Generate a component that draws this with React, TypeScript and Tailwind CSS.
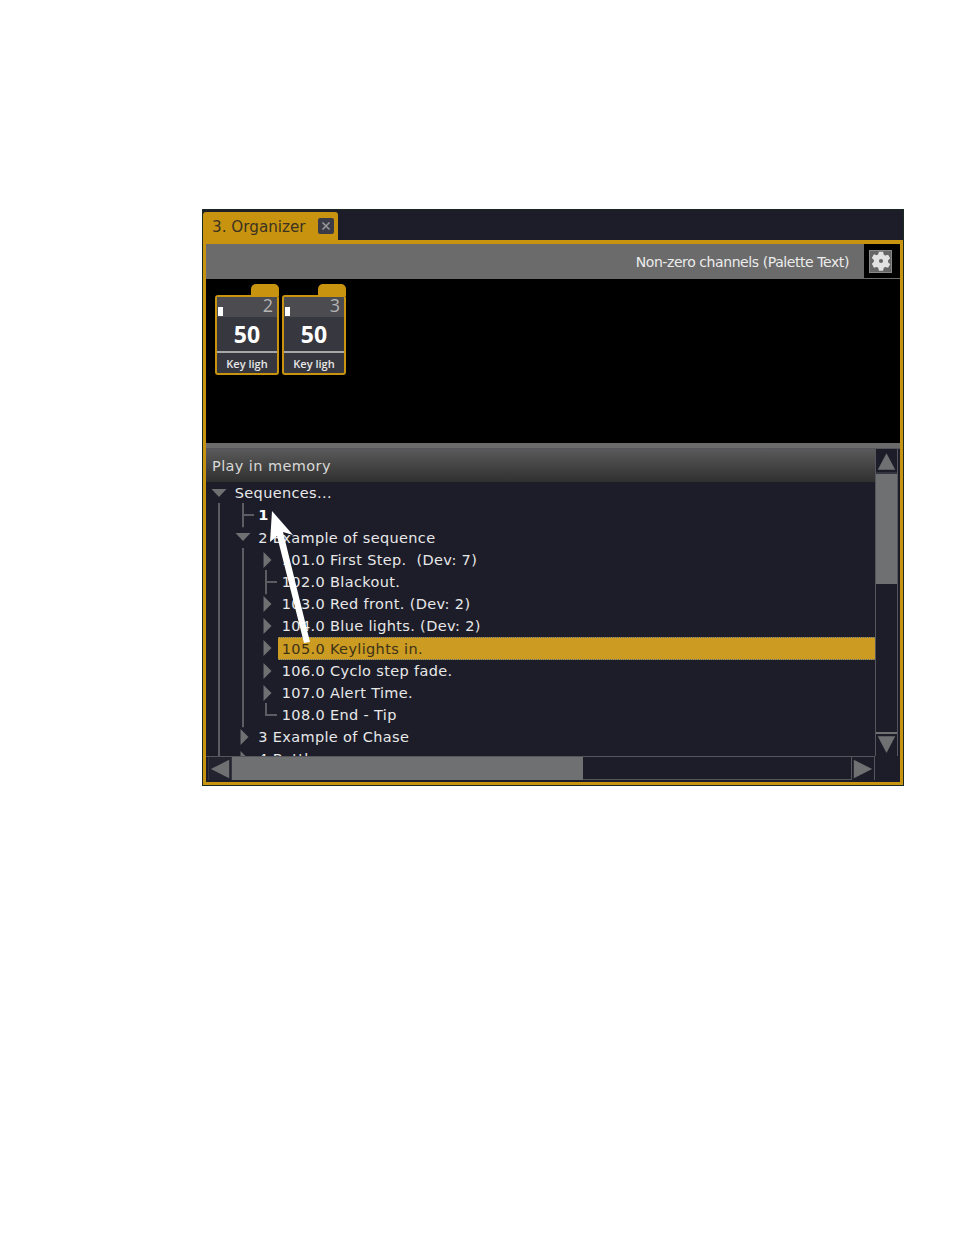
import React from "react";

type Glyph = "line" | "open" | "closed" | "tee" | "end";

type TreeRow = {
  cells: Glyph[];
  label: string;
  bold?: boolean;
  selected?: boolean;
};

const rows: TreeRow[] = [
  { cells: ["open"], label: "Sequences..." },
  { cells: ["line", "tee"], label: "1", bold: true },
  { cells: ["line", "open"], label: "2 Example of sequence" },
  { cells: ["line", "line", "closed"], label: "101.0 First Step.  (Dev: 7)" },
  { cells: ["line", "line", "tee"], label: "102.0 Blackout." },
  { cells: ["line", "line", "closed"], label: "103.0 Red front. (Dev: 2)" },
  { cells: ["line", "line", "closed"], label: "104.0 Blue lights. (Dev: 2)" },
  { cells: ["line", "line", "closed"], label: "105.0 Keylights in.", selected: true },
  { cells: ["line", "line", "closed"], label: "106.0 Cyclo step fade." },
  { cells: ["line", "line", "closed"], label: "107.0 Alert Time." },
  { cells: ["line", "line", "end"], label: "108.0 End - Tip" },
  { cells: ["line", "closed"], label: "3 Example of Chase" },
  { cells: ["line", "closed"], label: "4 Bottle" },
];

function TreeGlyph({ kind }: { kind: Glyph }) {
  return (
    <svg width="23.5" height="22.2" viewBox="0 0 23.5 22.2" className="shrink-0 block overflow-visible">
      {kind === "line" && <rect x="11" y="-1" width="2" height="24.2" fill="#5c5d63" />}
      {kind === "open" && <polygon points="4.5,7 19.5,7 12,15" fill="#6f7072" />}
      {kind === "closed" && <polygon points="9.5,3 17.5,11 9.5,19" fill="#6f7072" />}
      {kind === "tee" && <path d="M12 -1V23.200M12 11H23" stroke="#5c5d63" strokeWidth="2" fill="none" />}
      {kind === "end" && <path d="M12 -1V11H23" stroke="#5c5d63" strokeWidth="2" fill="none" />}
    </svg>
  );
}

function Row({ row }: { row: TreeRow }) {
  return (
    <div className="flex h-[22.2px] items-stretch shrink-0">
      {row.cells.map((c, i) => (
        <TreeGlyph key={i} kind={c} />
      ))}
      <div
        className={`flex-1 pl-[4px] pt-[2px] flex items-center whitespace-pre text-[14.5px] tracking-[0.35px] ${
          row.selected
            ? "bg-[#cb9b22] text-[#3d3218] border-y border-dotted border-[#5a6a80]"
            : row.bold
              ? "text-white font-bold"
              : "text-[#e8e8e8]"
        }`}
      >
        {row.label}
      </div>
    </div>
  );
}

function PaletteCard({ num }: { num: string }) {
  return (
    <div className="w-[64px] flex flex-col items-end">
      <div className="w-[28px] h-[12px] bg-[#c8940f] rounded-t-[5px] -mb-px" />
      <div
        className="w-full h-[80px] border-2 border-[#c8940f] rounded-[3px] bg-[#37373f] flex flex-col"
        style={{ fontFamily: '"Open Sans", sans-serif' }}
      >
        <div className="h-[20px] bg-[#4b4b50] flex justify-between pl-px pr-[4px]">
          <div className="w-[5px] h-[9px] bg-white mt-[10px]" />
          <span className="text-[18px] leading-[17px] text-[#b4b4b4]">{num}</span>
        </div>
        <div className="flex-1 flex items-center justify-center text-[23px] font-bold text-white">50</div>
        <div className="h-[22px] border-t-2 border-[#a8a8a8] pt-[2px] flex items-center justify-center text-[11px] font-semibold text-[#e8e8e8] whitespace-nowrap">
          Key ligh
        </div>
      </div>
    </div>
  );
}

function ScrollArrow({ dir }: { dir: "up" | "down" | "left" | "right" }) {
  const points = {
    up: "12,3 22,22 2,22",
    down: "2,2 22,2 12,21",
    left: "2,12 22,2 22,22",
    right: "2,2 22,12 2,22",
  }[dir];
  return (
    <svg width="24" height="24" viewBox="0 0 24 24" className="block">
      <polygon points={points} fill="#6f7072" />
    </svg>
  );
}

export default function App() {
  return (
    <div
      className="min-h-[1235px] bg-white pt-[209px] pl-[202px]"
      style={{ fontFamily: '"DejaVu Sans", "Noto Sans", sans-serif' }}
    >
      <div className="relative w-[702px] h-[577px] bg-[#1c1d29] border border-[#1a2a22] flex flex-col">
        {/* tab strip */}
        <div className="h-[30px] flex items-end shrink-0">
          <div className="w-[135px] h-[28px] bg-[#c8940f] rounded-t-[3px] flex items-center justify-between pl-[9px] pr-[4px]">
            <span className="text-[15.2px] pt-[2px] text-[#3b3222]">3. Organizer</span>
            <div className="w-[16px] h-[16px] rounded-[2px] bg-[#3a3b47] flex items-center justify-center">
              <svg width="10" height="10" viewBox="0 0 10 10">
                <path d="M1.500 1.500L8.500 8.500M8.500 1.500L1.500 8.500" stroke="#9a9a9a" strokeWidth="1.600" />
              </svg>
            </div>
          </div>
        </div>

        <div className="flex-1 min-h-0 border-[3px] border-t-4 border-[#c8940f] flex flex-col">
          {/* toolbar */}
          <div className="h-[35px] shrink-0 bg-[#6b6b6b] flex items-center justify-end">
            <span className="text-[14px] pt-[1px] text-[#ececec] mr-[14px] tracking-[-0.42px]">
              Non-zero channels (Palette Text)
            </span>
            <div className="w-[37px] h-[35px] bg-black border-l border-b border-[#6b6b6b] pr-[3px] flex items-center justify-center">
              <div className="w-[23px] h-[23px] bg-[#666] border border-[#888] flex items-center justify-center">
                <svg width="20" height="20" viewBox="0 0 24 24">
                  <path
                    fillRule="evenodd"
                    d="M9.500 1h5l.8 3.400 1.900 1.100 3.300-1 2.500 4.300-2.500 2.400v2.200l2.500 2.400-2.500 4.300-3.300-1-1.900 1.100-.8 3.400h-5l-.8-3.400-1.900-1.100-3.300 1L1 15.300l2.500-2.400v-2.200L1 8.300l2.500-4.300 3.300 1 1.900-1.100zM12 9.500a2.500 2.500 0 1 0 0 5 2.500 2.500 0 0 0 0-5z"
                    fill="#e2e2e2"
                  />
                </svg>
              </div>
            </div>
          </div>

          {/* palette area */}
          <div className="h-[164px] shrink-0 bg-black flex gap-[3px] pl-[9px] pt-[5px]">
            <PaletteCard num="2" />
            <PaletteCard num="3" />
          </div>
          <div className="h-[5px] shrink-0 bg-[#6b6b6b]" />

          {/* sequence tree + scrollbars */}
          <div className="flex-1 min-h-0 flex flex-col">
            <div className="h-[308px] shrink-0 flex border-t border-[#55565c]">
              <div className="flex-1 min-w-0 flex flex-col">
                <div className="h-[33px] shrink-0 bg-gradient-to-b from-[#5a5a5a] to-[#303030] flex items-center pl-[6px] pt-[3px] text-[14.5px] tracking-[0.4px] text-[#d8d8d8]">
                  Play in memory
                </div>
                <div className="flex-1 min-h-0 overflow-hidden pl-[1.25px] flex flex-col">
                  {rows.map((r) => (
                    <Row key={r.label} row={r} />
                  ))}
                </div>
              </div>
              {/* vertical scrollbar */}
              <div className="w-[23px] shrink-0 mr-[2px] flex flex-col border-x border-[#55565c]">
                <div className="h-[25px] shrink-0 flex items-center justify-center border-b-2 border-[#33343e]">
                  <ScrollArrow dir="up" />
                </div>
                <div className="h-[110px] shrink-0 bg-[#6f7072]" />
                <div className="flex-1" />
                <div className="h-[24px] shrink-0 flex items-center justify-center border-t-2 border-[#6f7072]">
                  <ScrollArrow dir="down" />
                </div>
              </div>
            </div>
            {/* horizontal scrollbar */}
            <div className="h-[24px] shrink-0 flex pl-[2px] border-t border-[#55565c] mr-[25px]">
              <div className="w-[24px] shrink-0 flex items-center justify-center bg-[#22232e] border-x border-[#33343e]">
                <ScrollArrow dir="left" />
              </div>
              <div className="w-[351px] shrink-0 bg-[#6f7072]" />
              <div className="flex-1 border-b border-[#55565c]" />
              <div className="w-[24px] shrink-0 flex items-center justify-center border-x border-[#55565c]">
                <ScrollArrow dir="right" />
              </div>
            </div>
          </div>
        </div>

        {/* annotation arrow over the tree */}
        <svg
          className="absolute left-[60px] top-[295px]"
          width="60"
          height="145"
          viewBox="263 505 60 145"
        >
          <polygon points="272,511 293,535 283,532 310,642 304,643 277,536 270,542" fill="#fff" />
        </svg>
      </div>
    </div>
  );
}
